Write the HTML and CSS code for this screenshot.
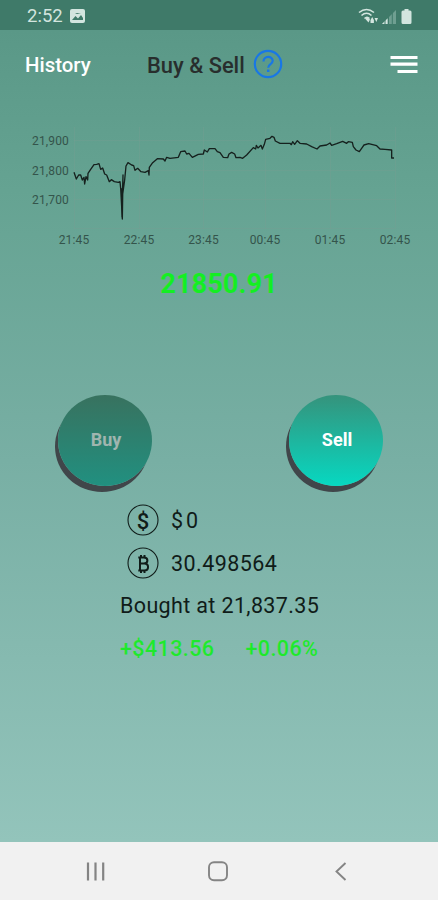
FILE: index.html
```
<!DOCTYPE html>
<html lang="en">
<head>
<meta charset="utf-8">
<title>Buy &amp; Sell</title>
<link rel="stylesheet" href="styles.css">
</head>
<body>
<div class="screen">
  <div class="status">
    <span class="time">2:52</span>
    <svg class="photo" width="15" height="14" viewBox="0 0 15 14"><rect width="15" height="14" rx="2" fill="#d3e5df"/><path d="M2 11l3.500-4 2.500 2.500L11 6l2 3v2z M2 4h3l2 1 4-1" fill="#3f7a69"/></svg>
    <svg class="signals" width="56" height="18" viewBox="358 6 56 18">
      <g fill="none" stroke="#d3e5df" stroke-width="1.600"><path d="M359 11.500q7.500-6 15 0M361.500 14.500q5-4.500 10 0M364.500 17.500q2.500-2.500 5 0"/></g>
      <path d="M365 17.500l3-1 2 2-1.500 3zM370.500 19l1.700-3 1.700 3v3h-3.400zM374.500 17h3.500l-1.700 4z" fill="#d3e5df"/>
      <path d="M382 23l14-14v14z" fill="#6f9f91"/><path d="M382 23l5.500-5.500v5.500z" fill="#d3e5df"/>
      <path d="M385 15v8M388.500 8v15M392.300 8v15" stroke="#3f7a69" stroke-width="1"/>
      <path d="M404.500 8h4v1.500h1.500a1.500 1.500 0 0 1 1.500 1.500v10.500a1.500 1.500 0 0 1-1.500 1.500h-7a1.500 1.500 0 0 1-1.500-1.500V11a1.500 1.500 0 0 1 1.500-1.500h1.500z" fill="#d3e5df"/>
    </svg>
  </div>
  <header class="header">
    <span class="history">History</span>
    <h1 class="title">Buy &amp; Sell</h1>
    <svg class="help" width="30" height="30" viewBox="0 0 30 30" fill="none" stroke="#1877e6"><circle cx="15" cy="14" r="13.200" stroke-width="2.200"/><path d="M10.500 11.500c0-6 9.200-6 9.200-.7 0 3.500-4.500 3.300-4.500 7" stroke-width="2.200"/><path d="M15.200 19.500v2.500" stroke-width="2.500"/></svg>
    <svg class="menu" width="28" height="20" viewBox="0 0 28 20" stroke="#fff" stroke-width="3.200"><path d="M.5 2.500H27.500M.5 9.200H27.500M7.500 16.500H27.500"/></svg>
  </header>
  <svg class="chart" width="438" height="150" viewBox="0 100 438 150">
    <path class="grid" d="M74.500 127V229M139.500 127V229M203.500 127V229M265.500 127V229M330.500 127V229M395.500 127V229M74 140.500H395M74 170.500H395M74 199.500H395M74 228.500H395"/>
    <g class="line">
      <path transform="translate(70 130) scale(.33333)" d="M12 127L19 147 26 135 32 135 37 150 42 142 44 162 48 140 53 150 54 130 62 118 72 104 80 103 87 101 92 118 98 114 104 132 110 135 118 155 124 149 133 155 145 157 150 155 152 175 157 267 159 135 157 200 164 150 168 108 174 98 185 105 191 107 195 121 203 115 213 125 225 127 235 122 237 135 238 112 248 98 262 86 280 87 285 93 290 82 300 85 325 82 332 65 345 63 350 72 357 70 367 82 385 73 400 72 403 60 412 66 418 56 435 56 442 65 450 68 460 82 473 83 477 72 485 67 494 72 498 83 510 82 518 85 530 75 550 53 557 57 559 46 564 54 573 46 577 57 583 43 587 28 600 25 606 19 612 22 616 33 630 40 660 40 664 44 668 35 674 43 682 32 690 40 710 42 725 50 741 57 750 48 770 45 780 39 785 46 800 41 818 34 830 40 835 35 847 37 850 50 858 60 868 65 877 52 882 45 896 41 920 47 930 57 945 58 965 60 965 84 972 84"/>
      <path transform="translate(70 130) scale(.33333)" d="M155 175L157 262"/>
    </g>
    <g class="labels" text-anchor="end"><text x="69" y="145">21,900</text><text x="69" y="174.500">21,800</text><text x="69" y="204">21,700</text></g>
    <g class="labels" text-anchor="middle"><text x="74" y="244">21:45</text><text x="139" y="244">22:45</text><text x="203.500" y="244">23:45</text><text x="265" y="244">00:45</text><text x="330" y="244">01:45</text><text x="395" y="244">02:45</text></g>
  </svg>
  <div class="price">21850.91</div>
  <div class="actions"><div class="round buy">Buy</div><div class="round sell">Sell</div></div>
  <div class="balance"><svg class="coin" width="32" height="32" viewBox="0 0 32 32"><circle cx="16" cy="15" r="15" fill="none" stroke="#101c19" stroke-width="1.100"/><text x="16" y="23.500" text-anchor="middle">$</text></svg><span>$<span class="zero">0</span></span></div>
  <div class="balance"><svg class="coin" width="32" height="32" viewBox="0 0 32 32"><circle cx="16" cy="15" r="15" fill="none" stroke="#101c19" stroke-width="1.100"/><path d="M11.300 9.500h5.500c4.800 0 4.800 6 0 6h-4h4.500c5 0 5 7 0 7h-6M13 9.500v13M14 7v2.500M17.500 7v2.500M14 22.500V25M17.500 22.500V25" fill="none" stroke="#101c19" stroke-width="2"/></svg><span class="amount">30.498564</span></div>
  <div class="bought">Bought at 21,837.35</div>
  <div class="gains"><span class="gain">+$413.56</span><span class="pct">+0.06%</span></div>
  <nav class="nav">
    <svg width="438" height="58" viewBox="0 842 438 58" fill="none" stroke="#848484"><path d="M88 862.500v18M95.500 862.500v18M103.200 862.500v18" stroke-width="2.200"/><rect x="209" y="862.300" width="18" height="18" rx="5" stroke-width="1.900"/><path d="M345.500 863l-9 8.500 9 8.500" stroke-width="1.900"/></svg>
  </nav>
</div>
</body>
</html>
```
FILE: styles.css
```
* { box-sizing: border-box; }
body { margin: 0; font-family: Roboto, "Liberation Sans", sans-serif; }
svg { display: block; flex: none; overflow: visible; }
.screen { width: 438px; height: 900px; display: flex; flex-direction: column; background: linear-gradient(#5a9887 30px, #65a392 190px, #78afa4 460px, #93c4bb 842px); overflow: hidden; }
.status { height: 30px; flex: none; background: #3f7a69; display: flex; align-items: center; padding: 2px 24px 0 27px; color: #d3e5df; }
.time { font-size: 18.5px; width: 43px; }
.signals { margin-left: auto; }
.header { height: 70px; flex: none; display: flex; align-items: center; padding: 0 20px 0 25px; }
.history { width: 122px; font-size: 20.4px; font-weight: 500; color: #fff; }
.title { margin: 0; width: 106px; font-size: 21.9px; font-weight: 500; color: #282e2d; white-space: nowrap; }
.menu { margin-left: auto; }
.chart { flex: none; }
.grid { fill: none; stroke: #789e92; stroke-width: 1; opacity: .35; }
.line { fill: none; stroke: #16211e; stroke-width: 4px; stroke-linejoin: round; }
.labels { font-size: 12px; letter-spacing: .15px; fill: #34544b; }
.price { height: 68px; line-height: 68px; flex: none; text-align: center; font-size: 27.3px; font-weight: 700; color: #14ee23; }
.actions { height: 180px; flex: none; display: flex; justify-content: space-between; padding: 77px 55px 0 58px; }
.round { width: 94px; height: 91px; padding-bottom: 3px; border-radius: 50%; display: flex; align-items: center; justify-content: center; padding-left: 2px; font-size: 18px; font-weight: 700; box-shadow: -3px 6px 0 #40464a; }
.buy { color: #a0b5af; background: linear-gradient(#38725f, #219080); }
.sell { color: #fff; background: linear-gradient(#35937c, #07d8c1); }
.balance { height: 43px; flex: none; display: flex; align-items: center; gap: 12px; padding: 2px 0 0 127px; font-size: 21.5px; color: #101c19; }
.coin text { font-size: 22px; font-weight: 500; fill: #101c19; }
.zero { margin-left: 3px; }
.amount { letter-spacing: .45px; }
.bought { height: 43px; line-height: 44px; flex: none; padding-left: 120px; font-size: 21.5px; letter-spacing: .36px; color: #101c19; }
.gains { height: 42px; flex: none; display: flex; align-items: center; gap: 31px; padding-left: 120px; font-size: 21.5px; font-weight: 500; letter-spacing: .4px; color: #1ee92c; }
.nav { margin-top: auto; height: 58px; flex: none; background: #f1f1f1; }
```
